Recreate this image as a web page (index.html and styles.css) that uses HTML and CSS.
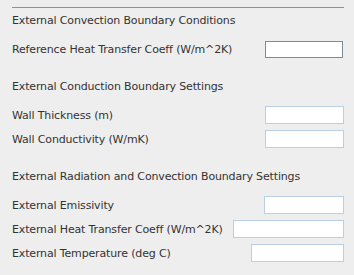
FILE: index.html
```html
<!DOCTYPE html>
<html lang="en">
<head>
  <meta charset="UTF-8">
  <title>Boundary Settings</title>
  <link rel="stylesheet" href="styles.css">
</head>
<body>

  <div class="panel">
    <div class="separator"></div>

    <div class="heading">External Convection Boundary Conditions</div>
    <div class="row row-first">
      <span>Reference Heat Transfer Coeff (W/m^2K)</span>
      <input class="field field-active w-78" type="text">
    </div>

    <div class="heading heading-gap">External Conduction Boundary Settings</div>
    <div class="row row-top">
      <span>Wall Thickness (m)</span>
      <input class="field w-79" type="text">
    </div>
    <div class="row">
      <span>Wall Conductivity (W/mK)</span>
      <input class="field w-79" type="text">
    </div>

    <div class="heading heading-gap2">External Radiation and Convection Boundary Settings</div>
    <div class="row row-top">
      <span>External Emissivity</span>
      <input class="field w-80" type="text">
    </div>
    <div class="row">
      <span>External Heat Transfer Coeff (W/m^2K)</span>
      <input class="field w-111" type="text">
    </div>
    <div class="row">
      <span>External Temperature (deg C)</span>
      <input class="field w-93" type="text">
    </div>
  </div>

</body>
</html>
```

FILE: styles.css
```css
html, body {
  margin: 0;
  background: #eeeeee;
}
body {
  font-family: "DejaVu Sans", sans-serif;
  font-size: 11px;
  letter-spacing: -0.15px;
  color: #333333;
}
.panel {
  padding: 7px 10px 0 12px;
  display: flex;
  flex-direction: column;
  white-space: nowrap;
}
.separator {
  height: 1px;
  background: #7b92c2;
}
.heading {
  height: 26px;
  line-height: 26px;
}
.heading-gap {
  margin-top: 11px;
  height: 24px;
  line-height: 24px;
}
.heading-gap2 {
  margin-top: 14px;
  height: 24px;
  line-height: 24px;
}
.row {
  height: 24px;
  display: flex;
  align-items: center;
  justify-content: space-between;
}
.row-first {
  height: 30px;
}
.row-top {
  margin-top: 4px;
}
.field {
  box-sizing: border-box;
  height: 18px;
  margin: 0;
  padding: 0 2px;
  border: 1px solid #b8cfe5;
  background: #ffffff;
  font: inherit;
  outline: none;
}
.field-active {
  height: 17px;
  border-color: #7a8a99;
  margin-right: 1px;
}
.w-78 { width: 78px; }
.w-79 { width: 79px; }
.w-80 { width: 80px; }
.w-111 { width: 111px; }
.w-93 { width: 93px; }
```
